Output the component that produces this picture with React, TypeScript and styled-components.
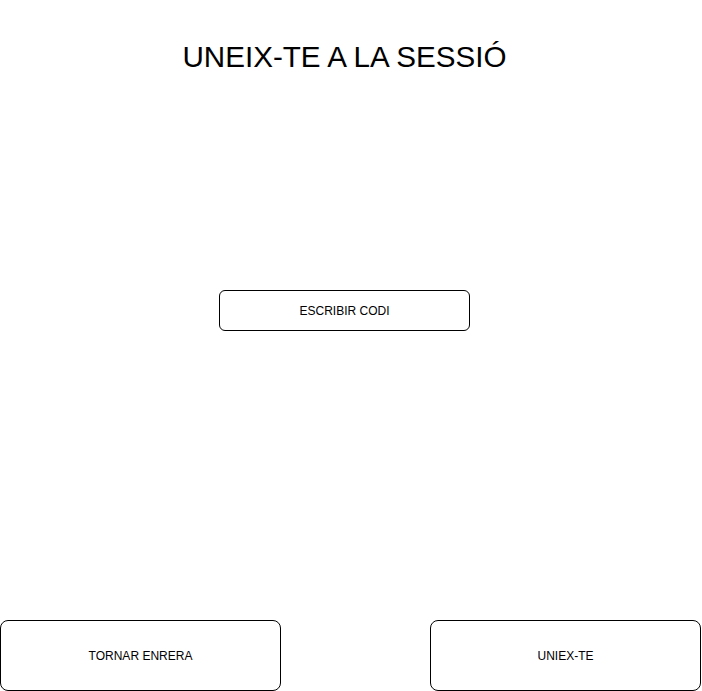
import React from "react";
import styled, { createGlobalStyle } from "styled-components";

const GlobalStyle = createGlobalStyle`
	html, body {
		margin: 0;
		padding: 0;
		background: #ffffff;
	}
	body {
		font-family: "Liberation Sans", Arial, Helvetica, sans-serif;
		color: #000000;
	}
`;

const App = () => {
	return (
		<>
			<GlobalStyle />
			<Page>
				<Main>
					<Title>UNEIX-TE A LA SESSIÓ</Title>
					<CodeBox>ESCRIBIR CODI</CodeBox>
				</Main>
				<Footer>
					<ActionButton $width={281}>TORNAR ENRERA</ActionButton>
					<ActionButton $width={271}>UNIEX-TE</ActionButton>
				</Footer>
			</Page>
		</>
	);
};

export default App;

const Page = styled.div`
	width: 702px;
	height: 691px;
	display: flex;
	flex-direction: column;
	box-sizing: border-box;
`;

const Main = styled.div`
	width: 689px;
	flex: 1;
	display: flex;
	flex-direction: column;
	align-items: center;
`;

const Title = styled.h1`
	margin: 40px 0 0;
	font-size: 29.6px;
	font-weight: normal;
	line-height: 34px;
	letter-spacing: 0;
`;

const CodeBox = styled.div`
	margin-top: 216px;
	width: 251px;
	height: 41px;
	box-sizing: border-box;
	border: 1px solid #000000;
	border-radius: 6px;
	display: flex;
	align-items: center;
	justify-content: center;
	font-size: 12px;
`;

const Footer = styled.div`
	width: 701px;
	display: flex;
	justify-content: space-between;
`;

const ActionButton = styled.div<{ $width: number }>`
	width: ${(p) => p.$width}px;
	height: 71px;
	box-sizing: border-box;
	border: 1px solid #000000;
	border-radius: 8px;
	display: flex;
	align-items: center;
	justify-content: center;
	font-size: 12px;
`;
